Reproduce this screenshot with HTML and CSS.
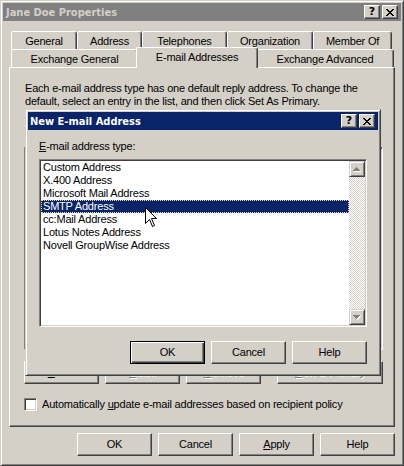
FILE: index.html
```html
<!DOCTYPE html>
<html>
<head>
<meta charset="utf-8">
<title>Jane Doe Properties</title>
<link rel="stylesheet" href="styles.css">
</head>
<body>
<div class="screen">
  <div class="window">
    <div class="titlebar inactive main-title">
      <span class="title">Jane Doe Properties</span>
      <div class="caption-btns">
        <span class="cbtn qmark">?</span>
        <span class="cbtn"><svg class="xglyph" width="8" height="7" viewBox="0 0 8 7"><path d="M0 0h2v1H0zM6 0h2v1H6zM1 1h2v1H1zM5 1h2v1H5zM2 2h4v1H2zM3 3h2v1H3zM2 4h4v1H2zM1 5h2v1H1zM5 5h2v1H5zM0 6h2v1H0zM6 6h2v1H6z"/></svg></span>
      </div>
    </div>

    <div class="tabs">
      <div class="tabrow">
        <div class="tab t-general">General</div>
        <div class="tab t-address">Address</div>
        <div class="tab t-tel">Telephones</div>
        <div class="tab t-org">Organization</div>
        <div class="tab t-member">Member Of</div>
      </div>
      <div class="tabrow">
        <div class="tab t-exgen">Exchange General</div>
        <div class="tab t-email selected">E-mail Addresses</div>
        <div class="tab t-exadv">Exchange Advanced</div>
      </div>
    </div>

    <div class="panel">
      <p class="intro">Each e-mail address type has one default reply address. To change the<br>default, select an entry in the list, and then click Set As Primary.</p>
      <div class="list-label"><u>E</u>-mail addresses:</div>
      <div class="listview"></div>
      <div class="actions">
        <button class="btn"><u>A</u>dd...</button>
        <button class="btn disabled"><u>E</u>dit...</button>
        <button class="btn disabled"><u>R</u>emove</button>
        <button class="btn disabled wide"><u>S</u>et As Primary</button>
      </div>
      <div class="check">
        <span class="checkbox"></span>
        <span class="check-label">Automatically <u>u</u>pdate e-mail addresses based on recipient policy</span>
      </div>
    </div>

    <div class="footer">
      <button class="btn">OK</button>
      <button class="btn">Cancel</button>
      <button class="btn"><u>A</u>pply</button>
      <button class="btn">Help</button>
    </div>
  </div>

  <div class="modal">
    <div class="titlebar active modal-title">
      <span class="title">New E-mail Address</span>
      <div class="caption-btns">
        <span class="cbtn qmark">?</span>
        <span class="cbtn"><svg class="xglyph" width="8" height="7" viewBox="0 0 8 7"><path d="M0 0h2v1H0zM6 0h2v1H6zM1 1h2v1H1zM5 1h2v1H5zM2 2h4v1H2zM3 3h2v1H3zM2 4h4v1H2zM1 5h2v1H1zM5 5h2v1H5zM0 6h2v1H0zM6 6h2v1H6z"/></svg></span>
      </div>
    </div>
    <div class="modal-body">
      <div class="field-label"><u>E</u>-mail address type:</div>
      <div class="listbox">
        <div class="items">
          <div class="item">Custom Address</div>
          <div class="item">X.400 Address</div>
          <div class="item">Microsoft Mail Address</div>
          <div class="item sel">SMTP Address</div>
          <div class="item">cc:Mail Address</div>
          <div class="item">Lotus Notes Address</div>
          <div class="item">Novell GroupWise Address</div>
        </div>
        <div class="scrollbar">
          <span class="sarrow"><svg width="8" height="5" viewBox="0 0 8 5"><path class="hl" d="M4 1h1v1H4zM3 2h3v1H3zM2 3h5v1H2zM1 4h7v1H1z"/><path class="sh" d="M3 0h1v1H3zM2 1h3v1H2zM1 2h5v1H1zM0 3h7v1H0z"/></svg></span>
          <span class="track"></span>
          <span class="sarrow"><svg width="8" height="5" viewBox="0 0 8 5"><path class="hl" d="M1 1h7v1H1zM2 2h5v1H2zM3 3h3v1H3zM4 4h1v1H4z"/><path class="sh" d="M0 0h7v1H0zM1 1h5v1H1zM2 2h3v1H2zM3 3h1v1H3z"/></svg></span>
        </div>
      </div>
      <div class="modal-actions">
        <button class="btn default">OK</button>
        <button class="btn">Cancel</button>
        <button class="btn">Help</button>
      </div>
    </div>
  </div>

  <svg class="cursor" width="13" height="21" viewBox="0 0 13 21"><path d="M0.5 0.5V16.5L4.5 12.5L7.5 19.5L9.5 18.5L6.5 11.5H11.5Z" fill="#fff" stroke="#000" stroke-width="1" stroke-linejoin="miter"/></svg>
</div>
</body>
</html>
```

FILE: styles.css
```css
* { box-sizing: border-box; }

html, body {
  margin: 0;
  padding: 0;
}

body {
  background: #d4d0c8;
  font-family: "Liberation Sans", Arial, sans-serif;
  font-size: 11px;
  line-height: 13px;
  letter-spacing: -0.2px;
  color: #000;
}

.screen {
  position: relative;
  width: 404px;
  height: 466px;
  overflow: hidden;
}

/* ---------- main window ---------- */
.window {
  width: 404px;
  height: 466px;
  padding: 2px;
  border: 1px solid;
  border-color: #d4d0c8 #404040 #404040 #d4d0c8;
  box-shadow: inset 1px 1px #fff, inset -1px -1px #808080;
  background: #d4d0c8;
  display: flex;
  flex-direction: column;
}

.titlebar {
  height: 18px;
  flex: none;
  display: flex;
  align-items: center;
  padding: 0 3px 0 3px;
}

.titlebar.inactive { background: #808080; color: #d4d0c8; }
.titlebar.active { background: #0a246a; color: #fff; }
.modal-title { padding-left: 2px; }

.title {
  flex: 1;
  font-family: "DejaVu Sans Condensed", "DejaVu Sans", sans-serif;
  font-weight: bold;
  font-size: 11px;
  letter-spacing: 0;
  white-space: nowrap;
}

.caption-btns {
  display: flex;
  gap: 2px;
}

.cbtn {
  width: 16px;
  height: 14px;
  background: #d4d0c8;
  border: 1px solid;
  border-color: #fff #404040 #404040 #fff;
  box-shadow: inset -1px -1px #808080;
  display: flex;
  align-items: center;
  justify-content: center;
  color: #000;
}

.qmark {
  font-family: "DejaVu Sans", sans-serif;
  font-weight: bold;
  font-size: 11px;
  line-height: 12px;
  letter-spacing: 0;
}

.xglyph { display: block; shape-rendering: crispEdges; fill: #000; }

/* ---------- tabs ---------- */
.tabs {
  margin: 10px 6px 0;
  padding-left: 2px;
  flex: none;
}

.tabrow {
  display: flex;
  height: 18px;
}

.tab {
  height: 18px;
  border: 1px solid;
  border-bottom: none;
  border-color: #fff #404040 transparent #fff;
  border-radius: 2px 3px 0 0;
  box-shadow: inset -1px 0 #808080;
  text-align: center;
  padding-top: 3px;
  white-space: nowrap;
  background: #d4d0c8;
}

.t-general { width: 66px; }
.t-address { width: 65px; }
.t-tel { width: 85px; }
.t-org { width: 86px; }
.t-member { width: 79px; }

.t-exgen { width: 127px; }
.t-email { width: 122px; margin-left: -2px; }
.t-exadv { width: 138px; margin-left: -2px; }

.tab.selected {
  position: relative;
  z-index: 2;
  height: 21px;
  margin-top: -2px;
  margin-bottom: -1px;
}

/* ---------- panel ---------- */
.panel {
  height: 360px;
  flex: none;
  margin: 0 6px;
  border: 1px solid;
  border-color: #fff #404040 #404040 #fff;
  box-shadow: inset -1px -1px #808080;
  padding: 14px 11px 0 14px;
  display: flex;
  flex-direction: column;
}

.intro {
  margin: 0 0 0 1px;
  white-space: nowrap;
}

.list-label {
  margin-top: 21px;
  margin-left: 1px;
}

.listview {
  margin-top: 5px;
  height: 203px;
  background: #fff;
  border: 1px solid;
  border-color: #808080 #fff #fff #808080;
  box-shadow: inset 1px 1px #404040, inset -1px -1px #d4d0c8;
}

.actions {
  display: flex;
  gap: 6px;
  margin-top: 11px;
}

.actions .wide {
  width: 106px;
  margin-left: auto;
}

.btn {
  width: 75px;
  height: 23px;
  padding: 0;
  margin: 0;
  background: #d4d0c8;
  border: 1px solid;
  border-color: #fff #404040 #404040 #fff;
  box-shadow: inset -1px -1px #808080;
  font-family: "Liberation Sans", Arial, sans-serif;
  font-size: 11px;
  line-height: 13px;
  letter-spacing: -0.2px;
  color: #000;
  display: flex;
  align-items: center;
  justify-content: center;
  flex: none;
}

.btn.disabled {
  color: #808080;
  text-shadow: 1px 1px #fff;
}

.btn.default {
  border-color: #000;
  box-shadow: inset 1px 1px #fff, inset -1px -1px #404040, inset -2px -2px #808080;
}

.check {
  display: flex;
  align-items: center;
  gap: 5px;
  margin-top: 14px;
}

.checkbox {
  width: 13px;
  height: 13px;
  background: #fff;
  border: 1px solid;
  border-color: #808080 #fff #fff #808080;
  box-shadow: inset 1px 1px #404040, inset -1px -1px #d4d0c8;
  flex: none;
}

.check-label { white-space: nowrap; }

.footer {
  display: flex;
  justify-content: flex-end;
  gap: 6px;
  margin: 6px 6px 0;
}

/* ---------- modal ---------- */
.modal {
  position: absolute;
  left: 25px;
  top: 109px;
  width: 356px;
  height: 267px;
  border: 1px solid;
  border-color: #d4d0c8 #404040 #404040 #d4d0c8;
  box-shadow: inset 1px 1px #fff, inset -1px -1px #808080;
  padding: 2px;
  background: #d4d0c8;
  display: flex;
  flex-direction: column;
  z-index: 5;
}

.modal-body {
  padding: 10px 11px 0;
  display: flex;
  flex-direction: column;
}

.field-label { white-space: nowrap; }

.listbox {
  margin-top: 6px;
  height: 168px;
  display: flex;
  background: #fff;
  border: 1px solid;
  border-color: #808080 #fff #fff #808080;
  box-shadow: inset 1px 1px #404040, inset -1px -1px #d4d0c8;
  padding: 1px;
}

.items {
  flex: 1;
}

.item {
  height: 13px;
  padding-left: 2px;
  white-space: nowrap;
}

.item.sel {
  background: #0a246a;
  color: #fff;
  outline: 1px dotted #f5db95;
  outline-offset: -1px;
}

.scrollbar {
  width: 16px;
  display: flex;
  flex-direction: column;
  background: repeating-conic-gradient(#fff 0 25%, #d4d0c8 0 50%) 0 0 / 2px 2px;
}

.track { flex: 1; }

.sarrow {
  width: 16px;
  height: 16px;
  flex: none;
  background: #d4d0c8;
  border: 1px solid;
  border-color: #d4d0c8 #404040 #404040 #d4d0c8;
  box-shadow: inset 1px 1px #fff, inset -1px -1px #808080;
  display: flex;
  align-items: center;
  justify-content: center;
}

.sarrow svg { display: block; shape-rendering: crispEdges; }
.sarrow .hl { fill: #fff; }
.sarrow .sh { fill: #808080; }

.modal-actions {
  display: flex;
  justify-content: flex-end;
  gap: 6px;
  margin-top: 14px;
}

.cursor {
  position: absolute;
  left: 145px;
  top: 207px;
  z-index: 10;
}
```
